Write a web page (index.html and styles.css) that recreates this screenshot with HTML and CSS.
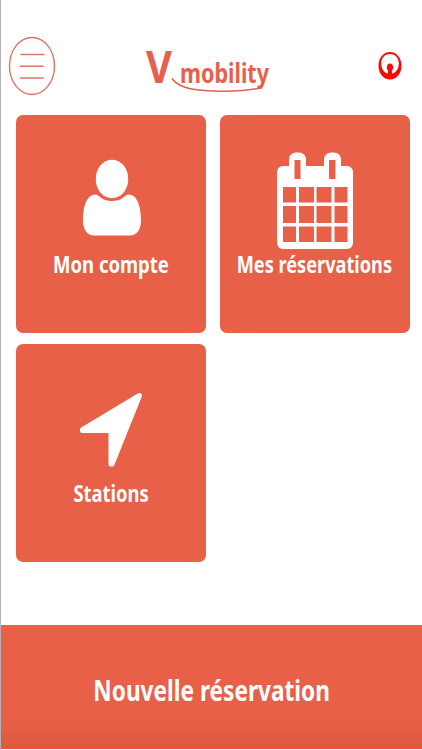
FILE: index.html
```
<!DOCTYPE html>
<html lang="fr">
<head>
    <meta charset="UTF-8">
    <meta name="viewport" content="width=device-width, initial-scale=1.0">
    <title>V mobility</title>
    <link rel="stylesheet" href="styles.css">
</head>
<body>
    <header class="top-bar">
        <button class="menu-btn" aria-label="Menu">
            <svg width="48" height="60" viewBox="0 0 48 60">
                <ellipse cx="24" cy="30" rx="22.5" ry="28.5"/>
                <path d="M12.5 18.5H36.5M12 30.3H35.7M12 42H35.7"/>
            </svg>
        </button>
        <svg class="logo" width="130" height="70" viewBox="0 -10 130 70">
            <text class="logo-v" x="3" y="40" textLength="26" lengthAdjust="spacingAndGlyphs">V</text>
            <text class="logo-name" x="37" y="40" textLength="89" lengthAdjust="spacingAndGlyphs">mobility</text>
            <path d="M29 35.500C34 43 45 47 70 48C87 48.700 105 48 119 44.500"/>
        </svg>
        <svg class="brand" width="24" height="30" viewBox="0 0 24 30">
            <path fill-rule="evenodd" d="M12 1C18.500 1 23.500 7 23.500 14.700C23.500 22.500 18.500 28.500 12 28.500C5.500 28.500 .5 22.500 .5 14.700C.5 7 5.500 1 12 1ZM12 3C6.700 3 3.200 7.200 3.200 12.500C3.200 18.500 7 23 12 23C17 23 20.800 18.500 20.800 12.500C20.800 7.200 17.300 3 12 3Z"/>
            <path d="M12 12.500C14 12.500 15.200 14.300 15.200 16.500C15.200 18.500 14 19.500 13.800 20L14.500 24H9.500L10.200 20C10 19.500 8.800 18.500 8.800 16.500C8.800 14.300 10 12.500 12 12.500Z"/>
        </svg>
    </header>

    <main class="tiles">
        <a class="tile">
            <svg class="tile-icon" width="100" height="100" viewBox="0 0 100 100">
                <ellipse cx="51" cy="29" rx="16.200" ry="19.300"/>
                <path d="M34.500 44.500C38 44.500 40 51 51 51C62 51 64 44.500 67.500 44.500C76 44.500 80 56 80 70.500C80 80 75.500 85.500 69 85.500H33C26.500 85.500 22 80 22 70.500C22 56 26 44.500 34.500 44.500Z"/>
            </svg>
            <span class="tile-label label-account">Mon compte</span>
        </a>
        <a class="tile">
            <svg class="tile-icon" width="100" height="100" viewBox="0 0 100 100">
                <rect x="12" y="16" width="76" height="83" rx="6"/>
                <rect x="24" y="2.500" width="17" height="35" rx="7"/>
                <rect x="59" y="2.500" width="17" height="35" rx="7"/>
                <path class="cut" d="M29.500 10H35.500V29H29.500ZM64 10H70.500V29H64Z"/>
                <path class="cut" d="M18 37H31V52.500H18ZM34 37H49V52.500H34ZM51.500 37H66.500V52.500H51.500ZM69.500 37H82.500V52.500H69.500Z"/>
                <path class="cut" d="M18 56H31V73H18ZM34 56H49V73H34ZM51.500 56H66.500V73H51.500ZM69.500 56H82.500V73H69.500Z"/>
                <path class="cut" d="M18 76.500H31V92H18ZM34 76.500H49V92H34ZM51.500 76.500H66.500V92H51.500ZM69.500 76.500H82.500V92H69.500Z"/>
            </svg>
            <span class="tile-label label-bookings">Mes réservations</span>
        </a>
        <a class="tile">
            <svg class="tile-icon" width="100" height="100" viewBox="0 0 100 100">
                <path class="arrow" d="M78.500 16.500L21.500 50.700V51.500H50V85L51 85Z"/>
            </svg>
            <span class="tile-label label-stations">Stations</span>
        </a>
    </main>

    <footer class="new-booking">
        <span>Nouvelle réservation</span>
    </footer>
</body>
</html>
```
FILE: styles.css
```
* {
    box-sizing: border-box;
}

body {
    margin: 0px;
    height: 750px;
    display: flex;
    flex-direction: column;
    background-color: white;
    border-left: 1px solid #b4b1b4;
    font-family: "Noto Sans", sans-serif;
    font-weight: bold;
    overflow: hidden;
}

.top-bar {
    height: 114.5px;
    padding: 36px 20px 0px 7px;
    display: flex;
    align-items: flex-start;
}

.menu-btn {
    width: 48px;
    height: 60px;
    padding: 0px;
    border: none;
    background: none;
}
.menu-btn svg {
    display: block;
    fill: none;
    stroke: #df7468;
    stroke-width: 1.4px;
}

.logo {
    margin: -3px 0px 0px 87px;
    fill: #e6604b;
    overflow: visible;
}
.logo path {
    fill: none;
    stroke: #e6604b;
    stroke-width: 1.5px;
}
.logo-v {
    font-size: 45px;
}
.logo-name {
    font-size: 26px;
}

.brand {
    margin: 15px 0px 0px auto;
    fill: #f80808;
}

.tiles {
    height: 510.5px;
    padding: 0px 12px 0px 15px;
    display: grid;
    grid-template-columns: 189.5px 189.5px;
    grid-auto-rows: 218px;
    column-gap: 14.5px;
    row-gap: 11.5px;
}

.tile {
    display: flex;
    flex-direction: column;
    align-items: center;
    padding-top: 35px;
    border-radius: 7px;
    background-color: #e86048;
    color: white;
}
.tile-icon {
    flex: none;
    fill: white;
}
.tile-icon .cut {
    fill: #e86048;
}
.tile-icon .arrow {
    stroke: white;
    stroke-width: 5px;
    stroke-linejoin: round;
}

.tile-label {
    margin-top: -1px;
    font-size: 23px;
    line-height: 30px;
    white-space: nowrap;
}
.label-account {
    transform: scaleX(.805);
}
.label-bookings {
    transform: scaleX(.79);
}
.label-stations {
    transform: scaleX(.8);
}

.new-booking {
    height: 124px;
    display: flex;
    justify-content: center;
    align-items: center;
    padding-top: 4px;
    background: linear-gradient(#e86048 78%, #dc583f);
    color: white;
    font-size: 29px;
}
.new-booking span {
    transform: scaleX(.78);
    white-space: nowrap;
}
```
